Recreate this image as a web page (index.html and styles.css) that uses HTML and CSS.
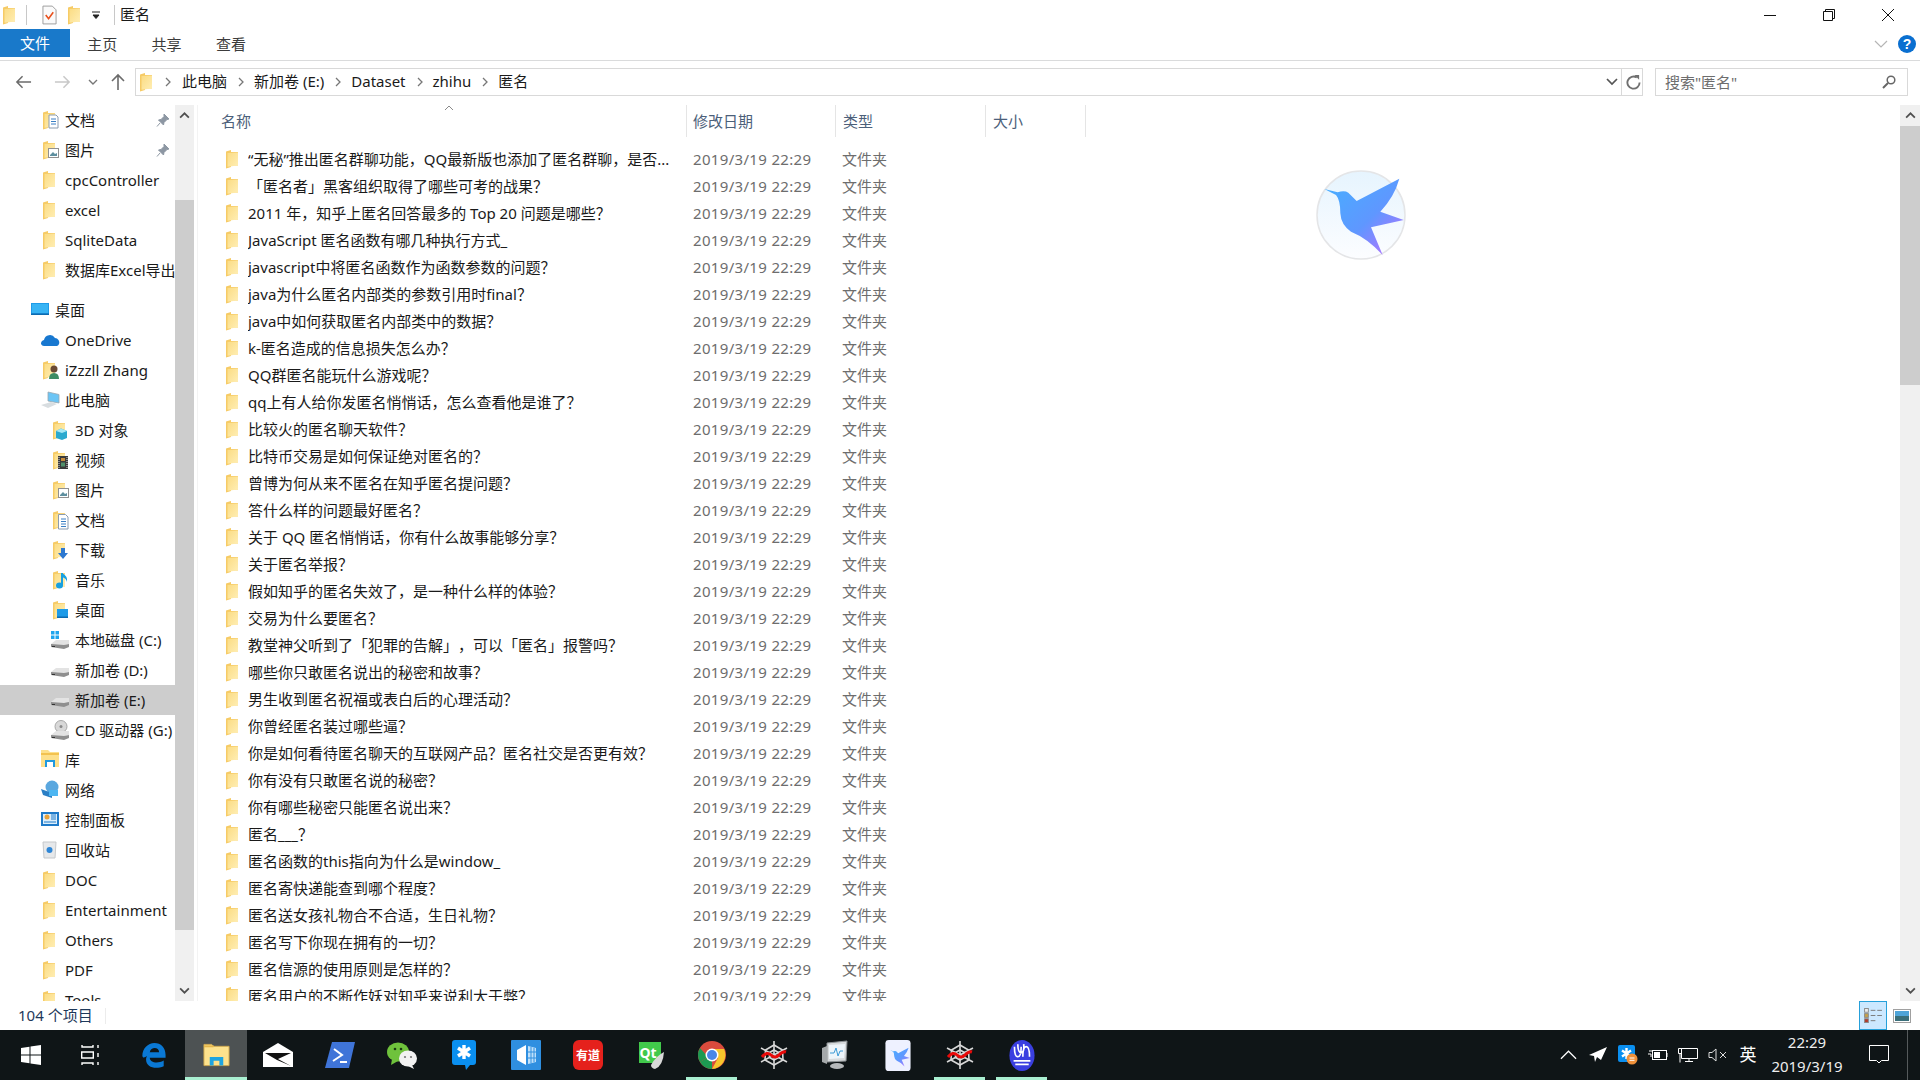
FILE: index.html
```html
<!DOCTYPE html>
<html lang="zh-CN">
<head>
<meta charset="utf-8">
<title>匿名</title>
<link rel="stylesheet" href="styles.css">
</head>
<body>
<svg class="defs" width="0" height="0" aria-hidden="true">
  <defs>
    <linearGradient id="birdgrad" x1="0" y1="0" x2="1" y2="1">
      <stop offset="0" stop-color="#45b0ff"/>
      <stop offset=".55" stop-color="#5f97ff"/>
      <stop offset="1" stop-color="#c46cff"/>
    </linearGradient>
    <linearGradient id="discgrad" x1="0" y1="0" x2="0" y2="1">
      <stop offset="0" stop-color="#e6f4fe"/>
      <stop offset="1" stop-color="#fcfdff"/>
    </linearGradient>
    <linearGradient id="foldergrad" x1="0" y1="0" x2="1" y2="1">
      <stop offset="0" stop-color="#fbdc84"/>
      <stop offset="1" stop-color="#ffeeb4"/>
    </linearGradient>
    <symbol id="folder" viewBox="0 0 24 20">
      <path d="M2 2.500 7 1v2h7v13.500H7V18L2 19.500z" fill="#f6cb66"/>
      <path d="M3.500 4l10.500-.6v13L3.500 17.800z" fill="url(#foldergrad)"/>
    </symbol>
    <symbol id="bird" viewBox="0 0 420 360">
      <path d="M100 117 140 127Q160 120 172 128L197 153Q250 125 325 86 310 140 268 185L338 210 240 232 275 315Q230 265 180 245 150 225 148 190 148 150 135 135Z" fill="url(#birdgrad)"/>
    </symbol>
    <symbol id="spider" viewBox="0 0 30 30">
      <g fill="none" stroke="#d8d8d8" stroke-width="1.600">
        <path d="M15 1v28M2 8l26 14M28 8 2 22"/>
        <path d="M15 5 23.500 10 24 20 15 25 6 20 6.500 10Z"/>
        <path d="M15 10 19.500 12.500V17.500L15 20 10.500 17.500V12.500Z"/>
      </g>
      <path d="M3 17Q8 11 12 15T20 15 27 12" fill="none" stroke="#e80a0a" stroke-width="3"/>
    </symbol>
    <symbol id="drive" viewBox="0 0 18 12">
      <path d="M0 7 5 3H18V7L5 10Z" fill="#e3e3e3"/>
      <path d="M0 7l13 1 5-1v3l-5 2L0 10z" fill="#8f8f8f"/>
      <path d="M1 9h3v1H1z" fill="#333"/>
    </symbol>
  </defs>
</svg>

<header class="titlebar">
  <svg class="qfolder" viewBox="0 0 24 20"><use href="#folder"/></svg>
  <i class="qsep"></i>
  <svg class="qcheck" viewBox="0 0 16 20"><path d="M1 .5h10l4 4v15H1z" fill="#fafafa" stroke="#9a9a9a"/><path d="M4 10l3 4 5-7" fill="none" stroke="#e8501c" stroke-width="1.700"/></svg>
  <svg class="qfolder" viewBox="0 0 24 20"><use href="#folder"/></svg>
  <svg class="qdrop" viewBox="0 0 8 8"><path d="M0 1h8M1 4h6L4 7.500z" stroke="#222" fill="#222" stroke-width="1"/></svg>
  <i class="qsep"></i>
  <span class="wintitle">匿名</span>
  <div class="winctl">
    <svg class="wbtn" viewBox="0 0 14 14"><path d="M1 7.500h12" stroke="#111" fill="none"/></svg>
    <svg class="wbtn" viewBox="0 0 14 14"><path d="M1.500 3.500h9v9h-9zM3.500 3.500v-2h9v9h-2" stroke="#111" fill="none"/></svg>
    <svg class="wbtn" viewBox="0 0 14 14"><path d="M1 1l12 12M13 1 1 13" stroke="#111" fill="none"/></svg>
  </div>
</header>

<nav class="tabs">
  <span class="tab tab-file">文件</span>
  <span class="tab">主页</span>
  <span class="tab">共享</span>
  <span class="tab">查看</span>
  <svg class="ribbon-chev" viewBox="0 0 14 8"><path d="M1 1l6 6 6-6" fill="none" stroke="#b5b5b5" stroke-width="1.200"/></svg>
  <svg class="help" viewBox="0 0 18 18"><circle cx="9" cy="9" r="9" fill="#0a6fd0"/><text x="9" y="14" class="help-q">?</text></svg>
</nav>

<div class="navrow">
  <div class="navbtns">
    <svg class="nb nb-back" viewBox="0 0 18 14"><path d="M17 7H2M8 1 2 7l6 6" fill="none" stroke="#6b6b6b" stroke-width="1.600"/></svg>
    <svg class="nb nb-fwd" viewBox="0 0 18 14"><path d="M1 7h15M10 1l6 6-6 6" fill="none" stroke="#c8c8c8" stroke-width="1.600"/></svg>
    <svg class="nb nb-down" viewBox="0 0 10 6"><path d="M1 1l4 4 4-4" fill="none" stroke="#777" stroke-width="1.400"/></svg>
    <svg class="nb nb-up" viewBox="0 0 14 18"><path d="M7 17V2M1 8l6-6 6 6" fill="none" stroke="#6b6b6b" stroke-width="1.600"/></svg>
  </div>
  <div class="addr">
    <svg class="addr-folder" viewBox="0 0 24 20"><use href="#folder"/></svg>
    <svg class="chev chev-first" viewBox="0 0 6 10"><path d="M1 1l4 4-4 4" fill="none" stroke="#777" stroke-width="1.300"/></svg>
    <span class="crumb">此电脑</span>
    <svg class="chev" viewBox="0 0 6 10"><path d="M1 1l4 4-4 4" fill="none" stroke="#777" stroke-width="1.300"/></svg>
    <span class="crumb">新加卷 (E:)</span>
    <svg class="chev" viewBox="0 0 6 10"><path d="M1 1l4 4-4 4" fill="none" stroke="#777" stroke-width="1.300"/></svg>
    <span class="crumb">Dataset</span>
    <svg class="chev" viewBox="0 0 6 10"><path d="M1 1l4 4-4 4" fill="none" stroke="#777" stroke-width="1.300"/></svg>
    <span class="crumb">zhihu</span>
    <svg class="chev" viewBox="0 0 6 10"><path d="M1 1l4 4-4 4" fill="none" stroke="#777" stroke-width="1.300"/></svg>
    <span class="crumb">匿名</span>
    <div class="addr-end">
      <svg class="addr-drop" viewBox="0 0 12 8"><path d="M1 1l5 5 5-5" fill="none" stroke="#555" stroke-width="1.700"/></svg>
      <div class="addr-refresh"><svg viewBox="0 0 16 16"><path d="M11.500 2.600A6.500 6.500 0 1 0 14.500 8" fill="none" stroke="#707070" stroke-width="2"/><path d="M9 0h5v5z" fill="#707070"/></svg></div>
    </div>
  </div>
  <div class="search">
    <span>搜索"匿名"</span>
    <svg viewBox="0 0 14 14"><circle cx="9" cy="5" r="3.800" fill="none" stroke="#666" stroke-width="1.500"/><path d="M6 8 1 13" stroke="#666" stroke-width="2"/></svg>
  </div>
</div>

<main class="content">
  <aside class="nav">
    <div class="nrow l1"><svg class="ni" viewBox="0 0 24 20"><use href="#folder"/><path d="M8 5h7l2 2v11H8z" fill="#fff" stroke="#8a9bb0"/><path d="M10 9h5M10 11.500h5M10 14h5" stroke="#3a7fc4"/></svg><span>文档</span><svg class="pin" viewBox="0 0 14 14"><path d="M8 1l5 5-2 .5-3 3-.5 2.500-5-5L5 6.500l3-3zM4 10l-3 3.500" fill="#8d97a3" stroke="#8d97a3"/></svg></div>
    <div class="nrow l1"><svg class="ni" viewBox="0 0 24 20"><use href="#folder"/><rect x="7.500" y="8.500" width="10" height="9" fill="#fff" stroke="#909090"/><path d="M9 15l3-3 2 2 2-1v3H9z" fill="#5e8f9f"/></svg><span>图片</span><svg class="pin" viewBox="0 0 14 14"><path d="M8 1l5 5-2 .5-3 3-.5 2.500-5-5L5 6.500l3-3zM4 10l-3 3.500" fill="#8d97a3" stroke="#8d97a3"/></svg></div>
    <div class="nrow l1"><svg class="ni" viewBox="0 0 24 20"><use href="#folder"/></svg><span>cpcController</span></div>
    <div class="nrow l1"><svg class="ni" viewBox="0 0 24 20"><use href="#folder"/></svg><span>excel</span></div>
    <div class="nrow l1"><svg class="ni" viewBox="0 0 24 20"><use href="#folder"/></svg><span>SqliteData</span></div>
    <div class="nrow l1"><svg class="ni" viewBox="0 0 24 20"><use href="#folder"/></svg><span>数据库Excel导出</span></div>
    <div class="nrow l0 nrow-group"><svg class="ni" viewBox="0 0 24 20"><rect x="0" y="3" width="18" height="12" fill="#1e9be8"/><rect x="1" y="4" width="16" height="9" fill="#38b4f4"/><rect x="0" y="13.500" width="18" height="1.500" fill="#0d6bb0"/></svg><span>桌面</span></div>
    <div class="nrow l1"><svg class="ni" viewBox="0 0 24 20"><path d="M0 14a4 4 0 0 1 3-4 6 6 0 0 1 11-2 4.500 4.500 0 0 1 4 6 3 3 0 0 1-2 2H3a3.500 3.500 0 0 1-3-2z" fill="#1878d0"/></svg><span>OneDrive</span></div>
    <div class="nrow l1"><svg class="ni" viewBox="0 0 24 20"><use href="#folder"/><circle cx="13" cy="9" r="3.500" fill="#6b4a34"/><path d="M8 19q0-6 5-6t5 6z" fill="#3d8c64"/></svg><span>iZzzll Zhang</span></div>
    <div class="nrow l1"><svg class="ni" viewBox="0 0 24 20"><path d="M7 2l11 2.500V13L7 11z" fill="#6cc5f5" stroke="#9aa7b0" stroke-width=".8"/><path d="M0 15l10-3 6 2-9 4z" fill="#d8dde0"/></svg><span>此电脑</span></div>
    <div class="nrow l2"><svg class="ni" viewBox="0 0 24 20"><use href="#folder"/><path d="M5 11l5-2.500L16 11v7l-5 2-6-2z" fill="#2aa9cf"/><path d="M5 11l6 2 5-2-6-2.500z" fill="#a5e7f5"/></svg><span>3D 对象</span></div>
    <div class="nrow l2"><svg class="ni" viewBox="0 0 24 20"><use href="#folder"/><rect x="7" y="6" width="10" height="13" fill="#3a3a3a"/><path d="M10 8h4v3h-4z" fill="#c68a3a"/><path d="M10 12.500h4v4h-4z" fill="#4f8f6a"/><path d="M8 7v11M16 7v11" stroke="#ddd" stroke-dasharray="1 1"/></svg><span>视频</span></div>
    <div class="nrow l2"><svg class="ni" viewBox="0 0 24 20"><use href="#folder"/><rect x="7.500" y="8.500" width="10" height="9" fill="#fff" stroke="#909090"/><path d="M9 15l3-3 2 2 2-1v3H9z" fill="#5e8f9f"/></svg><span>图片</span></div>
    <div class="nrow l2"><svg class="ni" viewBox="0 0 24 20"><use href="#folder"/><path d="M7.500 4.500h7l2.500 2.500v12H7.500z" fill="#fff" stroke="#8a9bb0"/><path d="M10 9h5M10 11.500h5M10 14h5M10 16.500h5" stroke="#3a7fc4"/></svg><span>文档</span></div>
    <div class="nrow l2"><svg class="ni" viewBox="0 0 24 20"><use href="#folder"/><path d="M10 8h4v5h3l-5 6-5-6h3z" fill="#2d78d0"/></svg><span>下载</span></div>
    <div class="nrow l2"><svg class="ni" viewBox="0 0 24 20"><use href="#folder"/><path d="M11 3v12" stroke="#18a0e0" stroke-width="2"/><ellipse cx="8.500" cy="15.500" rx="3.500" ry="3" fill="#18a0e0"/><path d="M11 3q6 3 5 9-1-4-5-5z" fill="#18a0e0"/></svg><span>音乐</span></div>
    <div class="nrow l2"><svg class="ni" viewBox="0 0 24 20"><use href="#folder"/><rect x="6" y="9" width="11" height="9" fill="#1e9be8"/><rect x="6" y="16.500" width="11" height="1.500" fill="#0d6bb0"/></svg><span>桌面</span></div>
    <div class="nrow l2"><svg class="ni" viewBox="0 0 24 20"><path d="M0 1h3.500v3.500H0zM4.500 1H8v3.500H4.500zM0 5.500h3.500V9H0zM4.500 5.500H8V9H4.500z" fill="#1fa5ee"/><use href="#drive" x="0" y="7" width="18" height="12"/></svg><span>本地磁盘 (C:)</span></div>
    <div class="nrow l2"><svg class="ni" viewBox="0 0 24 20"><use href="#drive" x="0" y="5" width="18" height="12"/></svg><span>新加卷 (D:)</span></div>
    <div class="nrow l2 selected"><svg class="ni" viewBox="0 0 24 20"><use href="#drive" x="0" y="5" width="18" height="12"/></svg><span>新加卷 (E:)</span></div>
    <div class="nrow l2"><svg class="ni" viewBox="0 0 24 20"><circle cx="10" cy="6.500" r="6" fill="#d8d8d8" stroke="#a8a8a8"/><circle cx="10" cy="6.500" r="1.500" fill="#8a8a8a"/><use href="#drive" x="0" y="8" width="18" height="12"/></svg><span>CD 驱动器 (G:)</span></div>
    <div class="nrow l1"><svg class="ni" viewBox="0 0 24 20"><path d="M0 0h7l2 2h9v15H0z" fill="#fde08b"/><path d="M0 3h18v2H0z" fill="#f3c24f"/><path d="M6 17v-5h6v5" fill="#fff"/><path d="M4 17v-7h10v7h-2v-5H6v5z" fill="#1f9ae0"/></svg><span>库</span></div>
    <div class="nrow l1"><svg class="ni" viewBox="0 0 24 20"><circle cx="11" cy="7" r="6.500" fill="#5aa7df"/><path d="M0 9l11 4v5L2 15z" fill="#2a7fc5"/><path d="M8 10h9v6H8z" fill="#4db6f2"/></svg><span>网络</span></div>
    <div class="nrow l1"><svg class="ni" viewBox="0 0 24 20"><rect x="0" y="2" width="18" height="14" fill="#1f7ac9"/><rect x="2" y="4" width="14" height="10" fill="#dceefb"/><circle cx="6" cy="7" r="2.500" fill="#e8a23a"/><path d="M10 5h5M10 7h5M10 9h5M3 12h12" stroke="#1f7ac9"/></svg><span>控制面板</span></div>
    <div class="nrow l1"><svg class="ni" viewBox="0 0 24 20"><path d="M2 2h13l-1 16H3z" fill="#e6e8ea" stroke="#c5c8cb"/><circle cx="8.500" cy="10" r="3" fill="#2e86d6"/></svg><span>回收站</span></div>
    <div class="nrow l1"><svg class="ni" viewBox="0 0 24 20"><use href="#folder"/></svg><span>DOC</span></div>
    <div class="nrow l1"><svg class="ni" viewBox="0 0 24 20"><use href="#folder"/></svg><span>Entertainment</span></div>
    <div class="nrow l1"><svg class="ni" viewBox="0 0 24 20"><use href="#folder"/></svg><span>Others</span></div>
    <div class="nrow l1"><svg class="ni" viewBox="0 0 24 20"><use href="#folder"/></svg><span>PDF</span></div>
    <div class="nrow l1"><svg class="ni" viewBox="0 0 24 20"><use href="#folder"/></svg><span>Tools</span></div>
  </aside>
  <div class="sbar sbar-nav">
    <div class="sarrow"><svg viewBox="0 0 12 8"><path d="M1 6.500 6 1.500l5 5" fill="none" stroke="#505050" stroke-width="2"/></svg></div>
    <div class="strack"><div class="sspace-navtop"></div><div class="sthumb sthumb-nav"></div></div>
    <div class="sarrow"><svg viewBox="0 0 12 8"><path d="M1 1.500 6 6.500l5-5" fill="none" stroke="#505050" stroke-width="2"/></svg></div>
  </div>
  <section class="main">
    <div class="colhead">
      <div class="ch ch-name">名称<svg class="sortcaret" viewBox="0 0 10 6"><path d="M1 5l4-4 4 4" fill="none" stroke="#8a8a8a"/></svg></div>
      <div class="ch ch-date">修改日期</div>
      <div class="ch ch-type">类型</div>
      <div class="ch ch-size">大小</div>
    </div>
    <div class="list">
      <div class="row"><svg class="fi" viewBox="0 0 24 20"><use href="#folder"/></svg><span class="nm">“无秘”推出匿名群聊功能，QQ最新版也添加了匿名群聊，是否...</span><span class="dt">2019/3/19 22:29</span><span class="ty">文件夹</span></div>
      <div class="row"><svg class="fi" viewBox="0 0 24 20"><use href="#folder"/></svg><span class="nm">「匿名者」黑客组织取得了哪些可考的战果？</span><span class="dt">2019/3/19 22:29</span><span class="ty">文件夹</span></div>
      <div class="row"><svg class="fi" viewBox="0 0 24 20"><use href="#folder"/></svg><span class="nm">2011 年，知乎上匿名回答最多的 Top 20 问题是哪些？</span><span class="dt">2019/3/19 22:29</span><span class="ty">文件夹</span></div>
      <div class="row"><svg class="fi" viewBox="0 0 24 20"><use href="#folder"/></svg><span class="nm">JavaScript 匿名函数有哪几种执行方式_</span><span class="dt">2019/3/19 22:29</span><span class="ty">文件夹</span></div>
      <div class="row"><svg class="fi" viewBox="0 0 24 20"><use href="#folder"/></svg><span class="nm">javascript中将匿名函数作为函数参数的问题？</span><span class="dt">2019/3/19 22:29</span><span class="ty">文件夹</span></div>
      <div class="row"><svg class="fi" viewBox="0 0 24 20"><use href="#folder"/></svg><span class="nm">java为什么匿名内部类的参数引用时final？</span><span class="dt">2019/3/19 22:29</span><span class="ty">文件夹</span></div>
      <div class="row"><svg class="fi" viewBox="0 0 24 20"><use href="#folder"/></svg><span class="nm">java中如何获取匿名内部类中的数据？</span><span class="dt">2019/3/19 22:29</span><span class="ty">文件夹</span></div>
      <div class="row"><svg class="fi" viewBox="0 0 24 20"><use href="#folder"/></svg><span class="nm">k-匿名造成的信息损失怎么办？</span><span class="dt">2019/3/19 22:29</span><span class="ty">文件夹</span></div>
      <div class="row"><svg class="fi" viewBox="0 0 24 20"><use href="#folder"/></svg><span class="nm">QQ群匿名能玩什么游戏呢？</span><span class="dt">2019/3/19 22:29</span><span class="ty">文件夹</span></div>
      <div class="row"><svg class="fi" viewBox="0 0 24 20"><use href="#folder"/></svg><span class="nm">qq上有人给你发匿名悄悄话，怎么查看他是谁了？</span><span class="dt">2019/3/19 22:29</span><span class="ty">文件夹</span></div>
      <div class="row"><svg class="fi" viewBox="0 0 24 20"><use href="#folder"/></svg><span class="nm">比较火的匿名聊天软件？</span><span class="dt">2019/3/19 22:29</span><span class="ty">文件夹</span></div>
      <div class="row"><svg class="fi" viewBox="0 0 24 20"><use href="#folder"/></svg><span class="nm">比特币交易是如何保证绝对匿名的？</span><span class="dt">2019/3/19 22:29</span><span class="ty">文件夹</span></div>
      <div class="row"><svg class="fi" viewBox="0 0 24 20"><use href="#folder"/></svg><span class="nm">曾博为何从来不匿名在知乎匿名提问题？</span><span class="dt">2019/3/19 22:29</span><span class="ty">文件夹</span></div>
      <div class="row"><svg class="fi" viewBox="0 0 24 20"><use href="#folder"/></svg><span class="nm">答什么样的问题最好匿名？</span><span class="dt">2019/3/19 22:29</span><span class="ty">文件夹</span></div>
      <div class="row"><svg class="fi" viewBox="0 0 24 20"><use href="#folder"/></svg><span class="nm">关于 QQ 匿名悄悄话，你有什么故事能够分享？</span><span class="dt">2019/3/19 22:29</span><span class="ty">文件夹</span></div>
      <div class="row"><svg class="fi" viewBox="0 0 24 20"><use href="#folder"/></svg><span class="nm">关于匿名举报？</span><span class="dt">2019/3/19 22:29</span><span class="ty">文件夹</span></div>
      <div class="row"><svg class="fi" viewBox="0 0 24 20"><use href="#folder"/></svg><span class="nm">假如知乎的匿名失效了，是一种什么样的体验？</span><span class="dt">2019/3/19 22:29</span><span class="ty">文件夹</span></div>
      <div class="row"><svg class="fi" viewBox="0 0 24 20"><use href="#folder"/></svg><span class="nm">交易为什么要匿名？</span><span class="dt">2019/3/19 22:29</span><span class="ty">文件夹</span></div>
      <div class="row"><svg class="fi" viewBox="0 0 24 20"><use href="#folder"/></svg><span class="nm">教堂神父听到了「犯罪的告解」，可以「匿名」报警吗？</span><span class="dt">2019/3/19 22:29</span><span class="ty">文件夹</span></div>
      <div class="row"><svg class="fi" viewBox="0 0 24 20"><use href="#folder"/></svg><span class="nm">哪些你只敢匿名说出的秘密和故事？</span><span class="dt">2019/3/19 22:29</span><span class="ty">文件夹</span></div>
      <div class="row"><svg class="fi" viewBox="0 0 24 20"><use href="#folder"/></svg><span class="nm">男生收到匿名祝福或表白后的心理活动？</span><span class="dt">2019/3/19 22:29</span><span class="ty">文件夹</span></div>
      <div class="row"><svg class="fi" viewBox="0 0 24 20"><use href="#folder"/></svg><span class="nm">你曾经匿名装过哪些逼？</span><span class="dt">2019/3/19 22:29</span><span class="ty">文件夹</span></div>
      <div class="row"><svg class="fi" viewBox="0 0 24 20"><use href="#folder"/></svg><span class="nm">你是如何看待匿名聊天的互联网产品？匿名社交是否更有效？</span><span class="dt">2019/3/19 22:29</span><span class="ty">文件夹</span></div>
      <div class="row"><svg class="fi" viewBox="0 0 24 20"><use href="#folder"/></svg><span class="nm">你有没有只敢匿名说的秘密？</span><span class="dt">2019/3/19 22:29</span><span class="ty">文件夹</span></div>
      <div class="row"><svg class="fi" viewBox="0 0 24 20"><use href="#folder"/></svg><span class="nm">你有哪些秘密只能匿名说出来？</span><span class="dt">2019/3/19 22:29</span><span class="ty">文件夹</span></div>
      <div class="row"><svg class="fi" viewBox="0 0 24 20"><use href="#folder"/></svg><span class="nm">匿名___？</span><span class="dt">2019/3/19 22:29</span><span class="ty">文件夹</span></div>
      <div class="row"><svg class="fi" viewBox="0 0 24 20"><use href="#folder"/></svg><span class="nm">匿名函数的this指向为什么是window_</span><span class="dt">2019/3/19 22:29</span><span class="ty">文件夹</span></div>
      <div class="row"><svg class="fi" viewBox="0 0 24 20"><use href="#folder"/></svg><span class="nm">匿名寄快递能查到哪个程度？</span><span class="dt">2019/3/19 22:29</span><span class="ty">文件夹</span></div>
      <div class="row"><svg class="fi" viewBox="0 0 24 20"><use href="#folder"/></svg><span class="nm">匿名送女孩礼物合不合适，生日礼物？</span><span class="dt">2019/3/19 22:29</span><span class="ty">文件夹</span></div>
      <div class="row"><svg class="fi" viewBox="0 0 24 20"><use href="#folder"/></svg><span class="nm">匿名写下你现在拥有的一切？</span><span class="dt">2019/3/19 22:29</span><span class="ty">文件夹</span></div>
      <div class="row"><svg class="fi" viewBox="0 0 24 20"><use href="#folder"/></svg><span class="nm">匿名信源的使用原则是怎样的？</span><span class="dt">2019/3/19 22:29</span><span class="ty">文件夹</span></div>
      <div class="row"><svg class="fi" viewBox="0 0 24 20"><use href="#folder"/></svg><span class="nm">匿名用户的不断作妖对知乎来说利大于弊？</span><span class="dt">2019/3/19 22:29</span><span class="ty">文件夹</span></div>
    </div>
    <div class="floater">
      <svg viewBox="0 0 90 90"><circle cx="45" cy="45" r="44" fill="url(#discgrad)" stroke="#e4e5e7" stroke-width="1.500"/><use href="#bird" x="-25" y="-20" width="140" height="120"/></svg>
    </div>
  </section>
  <div class="sbar sbar-main">
    <div class="sarrow"><svg viewBox="0 0 12 8"><path d="M1 6.500 6 1.500l5 5" fill="none" stroke="#505050" stroke-width="2"/></svg></div>
    <div class="strack"><div class="sthumb sthumb-main"></div></div>
    <div class="sarrow"><svg viewBox="0 0 12 8"><path d="M1 1.500 6 6.500l5-5" fill="none" stroke="#505050" stroke-width="2"/></svg></div>
  </div>
</main>

<footer class="status">
  <span class="count">104 个项目</span>
  <i class="status-sep"></i>
  <div class="viewbtns">
    <div class="vb vb-on"><svg viewBox="0 0 20 16"><rect x=".5" y=".5" width="4" height="4" fill="#eee" stroke="#888"/><rect x=".5" y="6" width="4" height="4" fill="#c8a24a" stroke="#888"/><rect x=".5" y="11.500" width="4" height="4" fill="#b33a2a" stroke="#888"/><path d="M7 2.500h5M14 2.500h5M7 8h5M14 8h5M7 13.500h5" stroke="#777"/></svg></div>
    <div class="vb"><svg viewBox="0 0 18 14"><rect x=".5" y=".5" width="17" height="13" fill="#fff" stroke="#a0a0a0"/><rect x="2" y="2" width="14" height="5" fill="#4ea4d8"/><rect x="2" y="7" width="14" height="5" fill="#3a6f7a"/></svg></div>
  </div>
</footer>

<footer class="taskbar">
  <div class="tb tb-start"><svg class="t20" viewBox="0 0 20 20"><path d="M0 3l8.500-1.200v7.700H0zM9.500 1.600 20 0v9.500H9.500zM0 10.500h8.500v7.700L0 17zM9.500 10.500H20V20L9.500 18.400z" fill="#fff"/></svg></div>
  <div class="tb tb-task"><svg class="t20" viewBox="0 0 20 20"><path d="M1 0v2h11V0M1 20v-2h11v2M0.700 7h11.600v6H0.700zM17 0v3M17 8v4M17 17v3" fill="none" stroke="#fff" stroke-width="1.400"/></svg></div>
  <div class="tb tb-edge"><svg class="t28" viewBox="0 0 28 28"><path d="M2 15C2 7 8 1 15 1c7 0 12 5 12 13v3H10c0 5 8 7 15 3v6c-9 4-19 1-19-7 0-2 .5-3 1-4-2 1-4 3-5 0zM10 11h10c0-6-9-6-10 0z" fill="#0a78d4"/></svg></div>
  <div class="tb tb-active"><svg class="t28" viewBox="0 0 28 24"><path d="M1 1h8l2 2h16v20H1z" fill="#fde28d" stroke="#cfa94f"/><path d="M1 4h10V2H1z" fill="#e5b64a"/><path d="M7 23V14h14v9h-4v-5h-6v5z" fill="#1ea4e0"/></svg></div>
  <div class="tb"><svg class="t30" viewBox="0 0 30 24"><path d="M0 9 15 0l15 9v15H0z" fill="#fff"/><path d="M2 10h26L15 16 28 23 14 17z" fill="#111"/></svg></div>
  <div class="tb"><svg class="t30" viewBox="0 0 30 26"><path d="M7 0h23l-6 26H0z" fill="#3f74d8"/><path d="M9 7l8 6-9 6M15 20h7" fill="none" stroke="#fff" stroke-width="2"/></svg></div>
  <div class="tb"><svg class="t30" viewBox="0 0 30 28"><ellipse cx="11" cy="11" rx="11" ry="9.500" fill="#6fc23c"/><path d="M5 18l-1 6 7-4z" fill="#6fc23c"/><circle cx="8" cy="8" r="1.300" fill="#1b3a12"/><circle cx="14" cy="8" r="1.300" fill="#1b3a12"/><ellipse cx="21" cy="17.500" rx="9" ry="8" fill="#f2f2f2"/><path d="M25 24l2 4-6-3z" fill="#f2f2f2"/><circle cx="18" cy="16" r="1.100" fill="#777"/><circle cx="24" cy="16" r="1.100" fill="#777"/></svg></div>
  <div class="tb"><svg class="t30" viewBox="0 0 24 30"><path d="M3 0h18q3 0 3 3v19q0 3-3 3h-3l-4 5-1-5H3q-3 0-3-3V3q0-3 3-3z" fill="#0a8ff0"/><path d="M12 5v14M6 8l12 8M18 8 6 16" stroke="#fff" stroke-width="3.400"/></svg></div>
  <div class="tb"><svg class="t30" viewBox="0 0 30 30"><rect width="30" height="30" rx="1" fill="#2f8fe0"/><path d="M6 10l9-5v20l-9-5z" fill="#fff"/><path d="M17 6l8 2v14l-8 2z" fill="#bfe0fa"/><path d="M20 7v16M23 8v14M17 12h8M17 18h8" stroke="#2f8fe0"/></svg></div>
  <div class="tb"><svg class="t30" viewBox="0 0 30 30"><rect width="30" height="30" rx="6" fill="#e5211c"/><text x="15" y="20" class="yd">有道</text></svg></div>
  <div class="tb"><svg class="t30" viewBox="0 0 30 30"><path d="M4 2h22v17l-4 4H4z" fill="#41c94b"/><text x="13" y="18" class="qt">Qt</text><path d="M29 12q-1 14-9 17-4-1-4-4 5-9 13-13z" fill="#d8d8d8"/></svg></div>
  <div class="tb tb-run"><svg class="t30" viewBox="0 0 30 30"><circle cx="15" cy="15" r="14" fill="#d94b3d"/><path d="M15 15 3 22a14 14 0 0 0 12 7z" fill="#1d9a52"/><path d="M3 22 A14 14 0 0 1 3 8L11 17z" fill="#1d9a52"/><path d="M15 9h12a14 14 0 0 1-12 20l6-11z" fill="#f7c52c"/><circle cx="15" cy="15" r="6.500" fill="#fff"/><circle cx="15" cy="15" r="5" fill="#4a86e8"/></svg></div>
  <div class="tb"><svg class="t30" viewBox="0 0 30 30"><use href="#spider"/></svg></div>
  <div class="tb"><svg class="t30" viewBox="0 0 30 30"><path d="M6 3l20-2-1 20-19 1z" fill="#d7dadc" stroke="#8a8f92"/><path d="M8 5l16-1-1 14-15 1z" fill="#eef5fa"/><path d="M9 13h4l2-5 2 8 2-5h3" fill="none" stroke="#3a9ad6"/><path d="M1 8l5-2v18l-5-2z" fill="#a5a9ab"/><ellipse cx="16" cy="26" rx="7" ry="3" fill="#b5b8ba"/></svg></div>
  <div class="tb"><svg class="t30 tall" viewBox="0 0 30 37"><rect width="30" height="37" rx="4" fill="#eef1ff"/><use href="#bird" x="-4" y="1" width="41" height="35"/></svg></div>
  <div class="tb tb-run"><svg class="t30" viewBox="0 0 30 30"><use href="#spider"/></svg></div>
  <div class="tb tb-run"><svg class="t30 tall" viewBox="0 0 30 37"><ellipse cx="15" cy="18.500" rx="15" ry="18.500" fill="#3a3fe0"/><path d="M6 8q0 12 4 12t4-12M10 5q0 10 4 10t3-10M16 20q0-12 4-12t4 12M5 25h20M7 29h16" fill="none" stroke="#fff" stroke-width="2"/></svg></div>
  <div class="tray">
    <div class="tr"><svg class="tri" viewBox="0 0 18 10"><path d="M1 9l8-8 8 8" fill="none" stroke="#fff" stroke-width="1.300"/></svg></div>
    <div class="tr"><svg class="tri-plane" viewBox="0 0 18 16"><path d="M0 8 18 0 12 13 8 10l-2 5-1-6z" fill="#fff"/></svg></div>
    <div class="tr"><svg class="tri-l" viewBox="0 0 20 20"><rect width="17" height="17" rx="2" fill="#0a8ff0"/><path d="M8.500 3v11M4 5.500l9 6M13 5.500l-9 6" stroke="#fff" stroke-width="2.400"/><circle cx="14" cy="14" r="5.500" fill="#f0913a"/><path d="M11.500 13h5M11.500 15.300h5" stroke="#fff"/></svg></div>
    <div class="tr"><svg class="tri-l" viewBox="0 0 20 14"><rect x="4.500" y="2.500" width="14" height="9" fill="none" stroke="#fff"/><rect x="6" y="4" width="6" height="6" fill="#fff"/><path d="M0 6h3v3M1 3h4M19 5v4" stroke="#fff"/></svg></div>
    <div class="tr"><svg class="tri-l" viewBox="0 0 20 16"><path d="M3.500 1.500h16v10h-16zM11 11.500v3M7 14.500h8M.5 1.500h3v5h-3zM2 6.500v9" fill="none" stroke="#fff"/></svg></div>
    <div class="tr"><svg class="tri-l" viewBox="0 0 20 14"><path d="M1 4.500h3l4-3.500v12L4 9.500H1zM12 4l6 6M18 4l-6 6" fill="none" stroke="#ddd"/></svg></div>
    <div class="tr tr-ime">英</div>
    <div class="clock"><span>22:29</span><span>2019/3/19</span></div>
    <div class="notif"><svg viewBox="0 0 20 20"><path d="M.5.500h19v15h-7L10 18l-2.500-2.500h-7z" fill="none" stroke="#fff"/></svg></div>
    <i class="showdesk"></i>
  </div>
</footer>
</body>
</html>
```

FILE: styles.css
```css
* { box-sizing: border-box; }
html, body { margin: 0; padding: 0; }
body {
  width: 1920px;
  height: 1080px;
  display: flex;
  flex-direction: column;
  overflow: hidden;
  background: #fff;
  color: #1a1a1a;
  font: 15px/20px "Noto Sans", "Noto Sans CJK SC", sans-serif;
  text-spacing-trim: space-all;
}
svg { display: block; flex: none; }
.defs { flex: none; }

/* title bar */
.titlebar { height: 29px; display: flex; align-items: center; flex: none; padding-left: 1px; }
.qfolder { width: 24px; height: 20px; }
.qsep { width: 1px; height: 20px; background: #c8c8c8; margin: 0 15px 0 1px; }
.qcheck { width: 15px; height: 20px; margin-right: 9px; }
.qdrop { width: 8px; height: 8px; margin-left: 2px; margin-right: 13px; }
.wintitle { margin-left: -10px; padding-bottom: 2px; }
.winctl { margin-left: auto; display: flex; padding-right: 25px; gap: 45px; }
.wbtn { width: 14px; height: 14px; }

/* ribbon tabs */
.tabs { height: 32px; display: flex; align-items: flex-start; flex: none; border-bottom: 1px solid #dadbdc; padding-right: 4px; }
.tab { height: 28px; line-height: 30px; padding: 0 17.2px; color: #3c3c3c; }
.tab-file { width: 70px; padding: 0; line-height: 28px; text-align: center; background: #1979ca; color: #fff; }
.ribbon-chev { width: 14px; height: 8px; margin: 11px 10px 0 auto; }
.help { width: 18px; height: 18px; margin-top: 6px; }
.help-q { font: bold 14px "Liberation Sans", sans-serif; fill: #fff; text-anchor: middle; }

/* navigation row */
.navrow { height: 44px; flex: none; display: flex; align-items: center; padding: 0 12px 2px 0; }
.navbtns { width: 135px; flex: none; height: 28px; display: flex; align-items: center; padding-left: 15px; }
.nb-back, .nb-fwd { width: 17px; height: 14px; }
.nb-fwd { margin-left: 22px; }
.nb-down { width: 10px; height: 6px; margin-left: 17px; }
.nb-up { width: 14px; height: 18px; margin-left: 13px; }
.addr { width: 1508px; height: 28px; border: 1px solid #d9d9d9; display: flex; align-items: center; padding-left: 2px; }
.addr-folder { width: 24px; height: 20px; margin-right: 3px; }
.chev { width: 6px; height: 10px; margin: 0 10px 0 11px; }
.chev-first { margin: 0 11px 0 0; }
.crumb { padding-bottom: 3px; }
.addr-end { margin-left: auto; display: flex; align-items: center; height: 100%; }
.addr-drop { width: 12px; height: 8px; margin-right: 3px; }
.addr-refresh { width: 21px; height: 100%; border-left: 1px solid #d9d9d9; display: flex; align-items: center; justify-content: center; padding-left: 2px; }
.addr-refresh svg { width: 15px; height: 15px; }
.search { width: 253px; height: 28px; margin-left: 12px; border: 1px solid #d9d9d9; display: flex; align-items: center; padding: 0 11px 0 9px; color: #6d6d6d; }
.search svg { width: 14px; height: 14px; margin-left: auto; }

/* content */
.content { flex: 1; display: flex; min-height: 0; }
.nav { width: 175px; flex: none; overflow: hidden; }
.nrow { height: 30px; display: flex; align-items: center; white-space: nowrap; overflow: hidden; }
.nrow-group { margin-top: 10px; }
.l0 { padding-left: 31px; }
.l1 { padding-left: 41px; }
.l2 { padding-left: 51px; }
.ni { width: 24px; height: 20px; }
.selected { background: #cdcdcd; }
.pin { width: 14px; height: 14px; margin-left: auto; margin-right: 5px; }
.sbar { width: 20px; flex: none; display: flex; flex-direction: column; background: #f0f0f0; }
.sbar-nav { width: 19px; margin-right: 3px; }
.sarrow { height: 21px; flex: none; display: flex; align-items: center; justify-content: center; }
.sarrow svg { width: 11px; height: 7px; }
.strack { flex: 1; display: flex; flex-direction: column; }
.sspace-navtop { height: 74px; flex: none; }
.sthumb { background: #cdcdcd; }
.sthumb-nav { height: 730px; }
.sthumb-main { height: 259px; }

/* file list */
.main { flex: 1; min-width: 0; position: relative; overflow: hidden; border-left: 1px solid #f3f3f3; }
.colhead { height: 32px; display: flex; margin-bottom: 8px; color: #4c607a; }
.ch { height: 32px; border-right: 1px solid #e5e5e5; line-height: 32px; flex: none; }
.ch-name { width: 489px; padding-left: 23px; position: relative; }
.ch-date { width: 149px; padding-left: 6px; }
.ch-type { width: 150px; padding-left: 7px; }
.ch-size { width: 100px; padding-left: 7px; }
.sortcaret { position: absolute; left: 246px; top: 0; width: 10px; height: 6px; }
.list { display: flex; flex-direction: column; }
.row { height: 27px; flex: none; display: flex; align-items: center; padding-left: 26px; white-space: nowrap; }
.fi { width: 24px; height: 20px; }
.nm { width: 438px; flex: none; overflow: hidden; }
.dt { width: 149px; flex: none; padding-left: 7px; color: #6d6d6d; letter-spacing: .33px; }
.ty { padding-left: 7px; color: #6d6d6d; }
.floater { position: absolute; left: 1118px; top: 65px; width: 90px; height: 90px; }
.floater svg { width: 90px; height: 90px; }

/* status */
.status { height: 29px; flex: none; display: flex; align-items: center; padding-left: 18px; color: #1e395b; }
.count { width: 87px; flex: none; padding-bottom: 2px; }
.status-sep { width: 1px; height: 16px; background: #ececec; }
.viewbtns { margin-left: auto; display: flex; padding-right: 6px; height: 100%; }
.vb { width: 25px; height: 29px; display: flex; align-items: center; justify-content: center; }
.vb svg { width: 18px; height: 14px; }
.vb-on { width: 28px; background: #cce8ff; border: 1px solid #26a0da; margin-right: 2px; }
.vb-on svg { width: 19px; height: 15px; }

/* taskbar */
.taskbar { height: 50px; flex: none; display: flex; background: #0f1517; color: #fff; }
.tb { width: 62px; height: 50px; flex: none; display: flex; align-items: center; justify-content: center; position: relative; }
.tb-start { width: 61px; }
.tb-task { padding-right: 2px; }
.tb-edge { padding-right: 2px; }
.tb-active { background: #4d5253; }
.tb-active::after { content: ""; position: absolute; left: 0; right: 0; bottom: 0; height: 3px; background: #a9efd1; }
.tb-run::after { content: ""; position: absolute; left: 5px; right: 6px; bottom: 0; height: 3px; background: #a9efd1; }
.t20 { width: 20px; height: 20px; }
.t28 { width: 27px; height: 26px; }
.t30 { width: 30px; height: 30px; }
.t30.tall { height: 31px; }
.yd { font: bold 12px "Noto Sans CJK SC", sans-serif; fill: #fff; text-anchor: middle; }
.qt { font: bold 14px "Noto Sans", sans-serif; fill: #fff; text-anchor: middle; }
.tray { margin-left: auto; width: 367px; display: flex; align-items: center; height: 100%; }
.tr { width: 30px; height: 100%; flex: none; display: flex; align-items: center; justify-content: center; }
.tri { width: 17px; height: 12px; }
.tri-plane { width: 18px; height: 16px; }
.tri-l { width: 20px; height: 20px; }
.tr-ime { font-size: 17px; }
.clock { width: 88px; flex: none; display: flex; flex-direction: column; align-items: center; gap: 4px; color: #eee; line-height: 20px; padding-bottom: 2px; }
.notif { width: 56px; flex: none; display: flex; justify-content: center; }
.notif svg { width: 20px; height: 20px; }
.showdesk { width: 1px; height: 100%; background: #555a5c; }
```
